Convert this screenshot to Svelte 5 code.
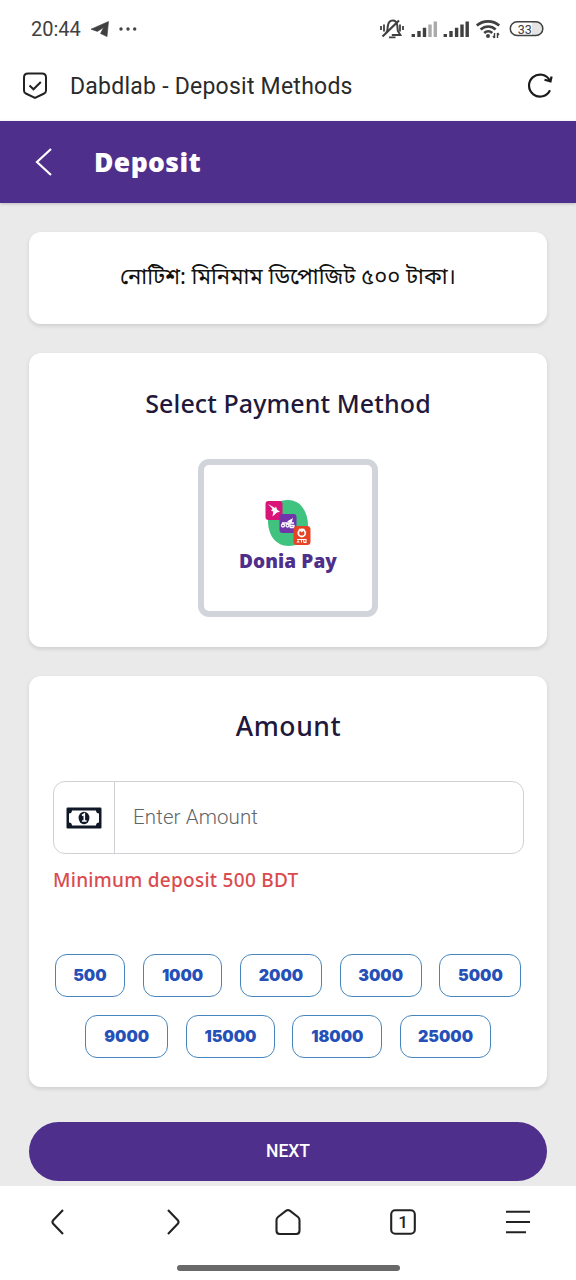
<script>
  const amountRows = [
    [
      { value: 500, width: 70.5 },
      { value: 1000, width: 79.5 },
      { value: 2000, width: 82 },
      { value: 3000, width: 82 },
      { value: 5000, width: 82 }
    ],
    [
      { value: 9000, width: 83.5 },
      { value: 15000, width: 88.5 },
      { value: 18000, width: 90 },
      { value: 25000, width: 91 }
    ]
  ];
  let amount = $state('');
</script>

<div class="screen">
  <div class="status">
    <span class="clock">20:44</span>
    <svg class="plane" width="18" height="16" viewBox="0 0 18 16"><path d="M0 8.2 17.5.5 16 15.6 9.5 12.500 12.600 6.500 6.400 10.400Z" fill="#404040" stroke="#404040" stroke-linejoin="round" stroke-width=".6" /></svg>
    <svg class="dots" width="18" height="4" viewBox="0 0 18 4" fill="#444"><circle cx="2" cy="2" r="1.7" /><circle cx="9" cy="2" r="1.7" /><circle cx="15.7" cy="2" r="1.7" /></svg>
    <svg class="indicators" width="170" height="24" viewBox="378 17 170 24" fill="none" stroke="#404040" stroke-width="1.8">
      <path d="M386 33c2-2 1.500-4 1.700-6.500q.8-6 4.800-6c3 0 4.500 2 4.800 5l.5 5.300 2.500 4.200h-8.500" stroke-width="2" />
      <path d="M382.500 36.500 399 20.500" stroke-width="2.200" /><path d="M389 37.300h6.500M381 26v4M384 24.500v7M400 24.500v7M403 26v4" />
      <g stroke-width="3.400">
        <path d="M413.300 34v3M419 31v6M424.500 27.800v9.200" />
        <path stroke="#aaa" d="M430 24.500v12.500M435.300 21.500v15.500" />
        <path d="M445.300 34v3M451 31v6M456.600 27.800v9.200M462 24.500v12.500M467.200 21.500v15.500" />
      </g>
      <g stroke-width="2.700"><path d="M476.800 25.500c6.500-5.500 16-5.500 22.400 0M480.600 29.500c4.500-4 11-4 15 0M484.200 33c2.500-2.300 5.700-2.300 8 0" /></g>
      <circle cx="488" cy="36" r="2" fill="#404040" stroke="none" />
      <path d="M494.500 33v5M497.500 33v5M493 36l1.500 2M499 35l-1.500-2" stroke-width="1.400" />
      <path d="M532 21.500h3.500a7 7 0 0 1 0 14H532z" fill="#e4e4e4" stroke="none" />
      <rect x="510.300" y="21.800" width="32.500" height="13.800" rx="6.900" stroke-width="1.500" />
      <text x="524.800" y="33.500" text-anchor="middle" fill="#404040" stroke="none" font-family="Roboto, sans-serif" font-size="12.500">33</text>
    </svg>
  </div>

  <div class="address">
    <svg width="26" height="28" viewBox="0 0 26 28" fill="none" stroke="#222" stroke-width="2"><path d="M6 1.500h14q4 0 4 4v13q0 2-1.800 3L13 26l-9.200-4.500Q2 20.500 2 18.500v-13q0-4 4-4Z" /><path d="m7.500 13.500 4 3.800 7.300-7.300" /></svg>
    <span>Dabdlab - Deposit Methods</span>
    <svg class="reload" width="28" height="28" viewBox="0 0 28 28" fill="none" stroke="#1b1b1b" stroke-width="2.200"><path d="M24 18.200A11 11 0 1 1 23.800 8.500M25.600 4.500 24.500 9.300l-6-1.500" /></svg>
  </div>

  <header>
    <svg width="18" height="30" viewBox="0 0 18 30" fill="none" stroke="#fff" stroke-width="2.200"><path d="M16 2 2 15l14 13" /></svg>
    <h1>Deposit</h1>
  </header>

  <main>
    <section class="notice"><p>নোটিশ: মিনিমাম ডিপোজিট ৫০০ টাকা।</p></section>

    <section class="methods">
      <h2>Select Payment Method</h2>
      <button class="method">
        <svg width="46" height="48" viewBox="0 0 46 48">
          <path d="M23 1C37 1 43 15 43 26c0 12-6 21-19 21C9 47 3 34 3 22 3 9 10 1 23 1Z" fill="#3fc37f" />
          <rect x=".500" y="2" width="17" height="19" rx="3" fill="#d91578" />
          <path d="m3 5 7 4 1-1.500 1 3 3 2.200-3 .8-4.500 4 .8-5-2.300-.7 1.500-2Z" fill="#fff" />
          <rect x="14.500" y="15" width="17" height="19" rx="3" fill="#7135a9" />
          <path d="m22 22.500 6-3.500-1.500 5Z" fill="#fff" />
          <g fill="none" stroke="#fff" stroke-width="1.300"><circle cx="18" cy="26.500" r="1.500" /><circle cx="22.500" cy="26.500" r="1.500" /><path d="M25 24.500v4m0-2h4v2h-4M17 24h12" /></g>
          <rect x="28.500" y="27" width="17" height="19" rx="3.500" fill="#e64225" />
          <circle cx="36.800" cy="34" r="3.500" fill="none" stroke="#fff" stroke-width="1.800" /><path d="m34 30 2.800 2.500 2.500-2.500" stroke="#fff" stroke-width="1.300" fill="none" />
          <path d="M32 40.500h9.500m-8 1-1 1.500 2 0m2-2.500v3m2-3 .5 3h2v-3" stroke="#fff" stroke-width="1.100" fill="none" />
        </svg>
        <span>Donia Pay</span>
      </button>
    </section>

    <section class="amount">
      <h2>Amount</h2>
      <div class="field">
        <div class="prefix">
          <svg width="36" height="22" viewBox="0 0 36 22"><rect x=".500" y=".500" width="35" height="21" rx="1.200" fill="#101827" /><path d="M6 3.500h24q.2 3 3 3v9q-2.800 0-3 3H6q-.2-3-3-3v-9q2.800 0 3-3Z" fill="#fff" /><ellipse cx="18" cy="11" rx="5.400" ry="6.200" fill="#101827" /><path d="M16 8.500 18.300 7v7m-2.300 0h4.600" fill="none" stroke="#fff" stroke-width="1.600" /></svg>
        </div>
        <input bind:value={amount} placeholder="Enter Amount" />
      </div>
      <p class="hint">Minimum deposit 500 BDT</p>
      <div class="chips">
        {#each amountRows as row}
          <div class="row">
            {#each row as chip}
              <button style="width: {chip.width}px" onclick={() => (amount = String(chip.value))}>{chip.value}</button>
            {/each}
          </div>
        {/each}
      </div>
    </section>

    <button class="next">NEXT</button>
  </main>

  <footer>
    <nav>
      <svg width="28" height="28" viewBox="0 0 28 28"><path d="M19 2 9.200 12.200q-1.500 1.800 0 3.600L19 26" /></svg>
      <svg width="28" height="28" viewBox="0 0 28 28"><path d="m9 2 9.800 10.200q1.500 1.800 0 3.600L9 26" /></svg>
      <svg width="28" height="28" viewBox="0 0 28 28"><path d="M12.200 2.700 4 9q-1.500 1.200-1.500 3.200v10.600q0 3.200 3.200 3.200h16.600q3.200 0 3.200-3.200V12.200q0-2-1.500-3.200l-8.200-6.300q-1.800-1.200-3.600 0Z" /></svg>
      <svg width="28" height="28" viewBox="0 0 28 28"><rect x="2.200" y="2.200" width="23.600" height="23.600" rx="4" /><text x="14" y="19.700" text-anchor="middle">1</text></svg>
      <svg width="28" height="28" viewBox="0 0 28 28"><path d="M2 3.800h24M2 14h24M2 24.300h20" /></svg>
    </nav>
    <div class="handle"></div>
  </footer>
</div>

<style>
  :global(body) { margin: 0; }
  * { box-sizing: border-box; }
  h1, h2, p { margin: 0; }
  button { font: inherit; padding: 0; }
  svg { display: block; flex: none; }
  .screen { width: 576px; height: 1280px; overflow: hidden; display: flex; flex-direction: column; background: #fff; font-family: Roboto, sans-serif; }
  .status { height: 54px; padding: 4px 28px 0 31px; display: flex; align-items: center; flex: none; }
  .clock { font-size: 20px; color: #404040; width: 60px; }
  .dots { margin-left: 10px; }
  .indicators { margin-left: auto; }
  .address { height: 67px; padding: 0 22px 4px; display: flex; align-items: center; flex: none; font-size: 23px; color: #2a2a2a; }
  .address span { margin-left: 22px; padding-top: 2px; letter-spacing: 0.24px; }
  .reload { margin-left: auto; }
  header { height: 82px; flex: none; background: #4f2f8c; display: flex; align-items: center; padding-left: 35px; gap: 41px; color: #fff; box-shadow: 0 1px 3px #0003; z-index: 1; }
  h1 { font: 900 26.500px/34px "Noto Sans", sans-serif; letter-spacing: 0.4px; }
  main { height: 983px; flex: none; background: #eaeaea; padding: 29px 29px 0; display: flex; flex-direction: column; }
  section { background: #fff; border-radius: 12px; box-shadow: 0 2px 4px #0000001f; flex: none; display: flex; flex-direction: column; align-items: center; margin-bottom: 29px; }
  .notice { height: 92px; justify-content: center; padding-top: 2px; }
  .notice p { font: 22px/40px "Noto Sans Bengali", "Noto Sans", sans-serif; color: #111; white-space: nowrap; }
  h2 { font: 500 25px/36px "Noto Sans", sans-serif; color: #21183c; }
  .methods { height: 294px; padding-top: 32px; }
  .methods h2 { letter-spacing: 0.1px; }
  .method { margin-top: 38px; width: 180px; height: 158px; border: 6px solid #d1d5db; border-radius: 11px; background: #fff; display: flex; flex-direction: column; align-items: center; justify-content: flex-start; padding-top: 34px; color: #4f2f8c; }
  .method span { font: 900 19px/28px "Noto Sans", sans-serif; white-space: nowrap; letter-spacing: .1px; }
  .amount { height: 411px; padding: 32px 23px 0 24px; margin-bottom: 35px; }
  .amount h2 { font-size: 26.500px; letter-spacing: .6px; }
  .field { width: 471px; height: 73px; margin-top: 37px; border: 1px solid #cfd1d5; border-radius: 12px; display: flex; overflow: hidden; }
  .prefix { width: 61px; border-right: 1px solid #cfd1d5; display: grid; place-items: center; }
  input { border: 0; outline: 0; background: transparent; flex: 1; min-width: 0; padding: 0 18px 1px; font: 300 20.500px Roboto, sans-serif; letter-spacing: .12px; }
  input::placeholder { color: #5f6668; opacity: 1; }
  .hint { align-self: flex-start; margin-top: 12px; font: 500 19px/28px "Noto Sans", sans-serif; letter-spacing: .28px; color: #d94b4f; white-space: nowrap; }
  .chips { margin-top: 60px; display: flex; flex-direction: column; gap: 18px; }
  .row { display: flex; justify-content: center; gap: 17.700px; margin-right: 1px; }
  .row button { height: 43px; flex: none; border: 1px solid #4685bd; border-radius: 12px; background: #fff; color: #2450b8; font: 900 16px/24px Inter, sans-serif; padding-bottom: 2px; }
  .next { height: 59px; flex: none; border: 0; border-radius: 30px; background: #4f2f8c; color: #fff; font-size: 17.500px; font-weight: 500; padding-bottom: 2px; }
  footer { height: 94px; flex: none; display: flex; flex-direction: column; align-items: center; }
  nav { width: 100%; height: 71px; display: grid; grid-template-columns: repeat(5, 1fr); place-items: center; }
  nav svg { fill: none; stroke: #222; stroke-width: 2.100; }
  nav text { fill: #222; stroke: none; font: 500 17px Roboto, sans-serif; }
  .handle { width: 223px; height: 6px; margin-top: 8px; border-radius: 3px; background: #696969; }
</style>
